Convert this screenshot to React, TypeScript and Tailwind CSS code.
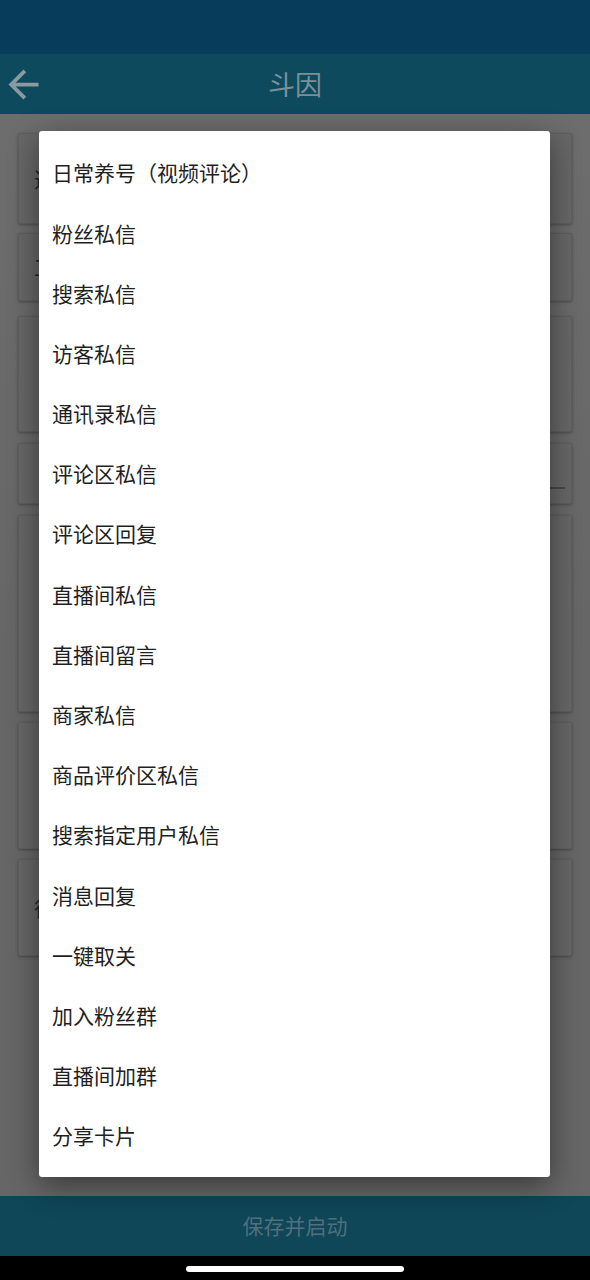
const items = [
    '日常养号（视频评论）',
    '粉丝私信',
    '搜索私信',
    '访客私信',
    '通讯录私信',
    '评论区私信',
    '评论区回复',
    '直播间私信',
    '直播间留言',
    '商家私信',
    '商品评价区私信',
    '搜索指定用户私信',
    '消息回复',
    '一键取关',
    '加入粉丝群',
    '直播间加群',
    '分享卡片'
];

const cards = [
    { mt: 'mt-[19px]', h: 'h-[91px]', label: '选择功能' },
    { mt: 'mt-[9px]', h: 'h-[68px]', label: '工作时长' },
    { mt: 'mt-[15px]', h: 'h-[116px]', label: '' },
    { mt: 'mt-[11px]', h: 'h-[61px]', label: '', input: true },
    { mt: 'mt-[11px]', h: 'h-[197px]', label: '' },
    { mt: 'mt-[10px]', h: 'h-[127px]', label: '' },
    { mt: 'mt-[10px]', h: 'h-[97px]', label: '很多' }
];

const font = { fontFamily: '"Noto Sans CJK SC", "Noto Sans", sans-serif' };

const App = () => {
    return (
        <div className="relative w-[590px] h-[1280px] overflow-hidden flex flex-col bg-[#666666]" style={font}>
            {/* Status bar */}
            <div className="h-[54px] shrink-0 bg-[#073d5a]" />

            {/* Header */}
            <div className="h-[60px] shrink-0 bg-[#0e4a5e] flex items-center relative">
                <svg viewBox="0 0 24 24" className="w-[45px] h-[45px] ml-[1px]" fill="#8a9aa0">
                    <path d="M20 11H7.83l5.59-5.59L12 4l-8 8 8 8 1.41-1.41L7.83 13H20v-2z" />
                </svg>
                <div className="absolute inset-0 flex items-center justify-center text-[27px] text-[#7b8f98]">斗因</div>
            </div>

            {/* Dimmed page body */}
            <div className="flex-1 px-[18px] flex flex-col bg-gradient-to-b from-[#6d6d6d] via-[#666666] to-[#666666]">
                {cards.map((c, i) => (
                    <div
                        key={i}
                        className={`${c.mt} ${c.h} shrink-0 bg-[#676767] border border-[#5f5f5f] rounded-[2px] shadow-[0_1px_3px_rgba(0,0,0,0.3)] flex items-center pl-[15px]`}
                    >
                        {c.label && <span className="text-[21px] text-[#262626]">{c.label}</span>}
                        {c.input && <div className="ml-auto mr-[6px] mt-[28px] w-[360px] h-[2px] bg-[#474747]" />}
                    </div>
                ))}
            </div>

            {/* Bottom button */}
            <div className="h-[60px] shrink-0 bg-[#0f4658] flex items-center justify-center text-[21px] text-[#4f6f7c]">
                保存并启动
            </div>

            {/* Nav bar */}
            <div className="h-[24px] shrink-0 bg-black flex justify-center pt-[10px]">
                <div className="w-[218px] h-[6px] rounded-full bg-white" />
            </div>

            {/* Dialog */}
            <div className="absolute left-[39px] top-[131px] w-[511px] h-[1046px] bg-white rounded-[3px] py-[12px] shadow-[0_8px_30px_rgba(0,0,0,0.45)]">
                {items.map((t) => (
                    <div key={t} className="h-[60.2px] flex items-center pl-[13px] text-[21px] text-[#1f1f1f]">
                        {t}
                    </div>
                ))}
            </div>
        </div>
    );
};

export default App;
